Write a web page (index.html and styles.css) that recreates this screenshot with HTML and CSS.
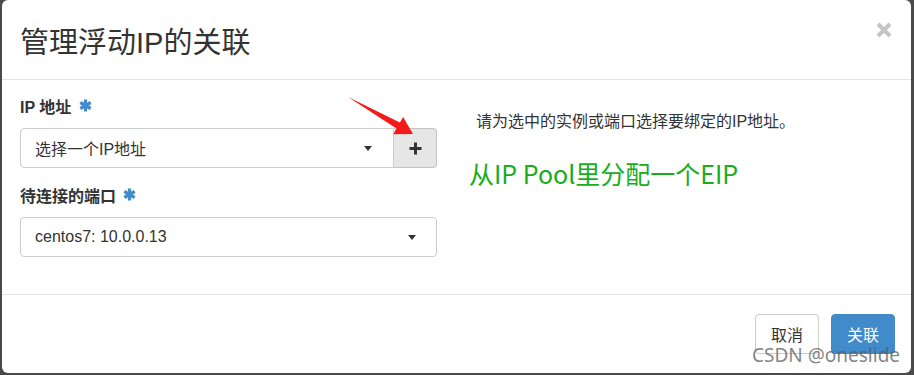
FILE: index.html
```html
<!DOCTYPE html>
<html lang="zh-CN">
<head>
    <meta charset="UTF-8">
    <title>管理浮动IP的关联</title>
    <link rel="stylesheet" href="styles.css">
</head>
<body>
    <div class="modal">
        <div class="modal-header">
            <h3 class="modal-title">管理浮动IP的关联</h3>
            <svg class="close" width="16" height="16" viewBox="0 0 16 16">
                <path d="M2 2 L14 14 M14 2 L2 14" stroke="#c4c4c4" stroke-width="4" />
            </svg>
        </div>

        <div class="modal-body">
            <div class="col-left">
                <div class="form-group">
                    <label class="form-label">IP 地址
                        <svg class="req" width="13" height="13" viewBox="0 0 13 13">
                            <path d="M6.5 0.5 V12.5 M1.3 3.5 L11.7 9.5 M11.7 3.5 L1.3 9.5" stroke="#428bca" stroke-width="3.2" />
                        </svg>
                    </label>
                    <div class="input-group">
                        <div class="select select-grouped">
                            <span>选择一个IP地址</span>
                            <span class="caret"></span>
                        </div>
                        <div class="addon">
                            <svg width="13" height="13" viewBox="0 0 13 13">
                                <path d="M6.5 0.5 V12.5 M0.5 6.5 H12.5" stroke="#333" stroke-width="3" />
                            </svg>
                        </div>
                    </div>
                </div>
                <div class="form-group">
                    <label class="form-label">待连接的端口
                        <svg class="req" width="13" height="13" viewBox="0 0 13 13">
                            <path d="M6.5 0.5 V12.5 M1.3 3.5 L11.7 9.5 M11.7 3.5 L1.3 9.5" stroke="#428bca" stroke-width="3.2" />
                        </svg>
                    </label>
                    <div class="select">
                        <span>centos7: 10.0.0.13</span>
                        <span class="caret"></span>
                    </div>
                </div>
            </div>
            <div class="col-right">
                <p class="help">请为选中的实例或端口选择要绑定的IP地址。</p>
                <p class="note">从IP Pool里分配一个EIP</p>
            </div>
        </div>

        <div class="modal-footer">
            <button class="btn">取消</button>
            <button class="btn btn-primary">关联</button>
        </div>

        <div class="watermark">CSDN @oneslide</div>
    </div>

    <!-- 标注箭头 -->
    <svg class="arrow" width="914" height="375" viewBox="0 0 914 375">
        <polygon points="348,97 399.9,122.6 403.1,116.9 413,134 393.3,134.3 396.5,128.6" fill="#f51a1a" />
    </svg>
</body>
</html>
```

FILE: styles.css
```css
/* 基础 */
body {
    margin: 0;
    height: 375px;
    overflow: hidden;
    position: relative;
    background-color: #4a4a4a;
    font-family: "Liberation Sans", "Noto Sans CJK SC", sans-serif;
    color: #333;
}

.modal {
    position: relative;
    margin: 0 3px 0 2px;
    height: 373px;
    background-color: #fff;
    border-radius: 6px;
    display: flex;
    flex-direction: column;
}

/* 头部 */
.modal-header {
    height: 79px;
    border-bottom: 1px solid #e5e5e5;
    padding: 0 19px 0 18px;
    display: flex;
    align-items: center;
    justify-content: space-between;
}

.modal-title {
    margin: 0;
    font-size: 29px;
    font-weight: normal;
    color: #333;
}

.close {
    align-self: flex-start;
    margin-top: 22px;
}

/* 内容 */
.modal-body {
    flex: 1;
    display: flex;
    padding: 18px 20px 0 18px;
}

.col-left {
    width: 417px;
}

.col-right {
    margin-left: 39px;
    padding-top: 14px;
}

.form-group {
    margin-bottom: 19px;
}

.form-label {
    display: block;
    font-size: 16px;
    line-height: 20px;
    font-weight: bold;
    margin-bottom: 10px;
}

.req {
    margin-left: 3px;
    vertical-align: 1px;
}

.input-group {
    display: flex;
}

.select {
    box-sizing: border-box;
    height: 40px;
    border: 1px solid #ccc;
    border-radius: 4px;
    padding: 0 20px 0 14px;
    display: flex;
    align-items: center;
    justify-content: space-between;
    font-size: 16px;
}

.select-grouped {
    width: 374px;
    border-radius: 4px 0 0 4px;
    padding-right: 21px;
}

.caret {
    width: 0;
    height: 0;
    border-top: 5px solid #333;
    border-left: 4.5px solid transparent;
    border-right: 4.5px solid transparent;
}

.addon {
    box-sizing: border-box;
    width: 43px;
    height: 40px;
    background-color: #e6e6e6;
    border: 1px solid #c4c4c4;
    border-left: none;
    border-radius: 0 4px 4px 0;
    display: flex;
    align-items: center;
    justify-content: center;
}

.help {
    margin: 0;
    font-size: 16px;
    line-height: 20px;
}

.note {
    margin: 26px 0 0 -7px;
    font-family: "Noto Sans CJK SC", sans-serif;
    font-size: 25px;
    line-height: 30px;
    color: #19ad19;
}

/* 底部 */
.modal-footer {
    border-top: 1px solid #e5e5e5;
    padding: 19px 16px 19px;
    display: flex;
    justify-content: flex-end;
    gap: 12px;
}

.btn {
    height: 40px;
    padding: 0 15px;
    font-family: "Liberation Sans", "Noto Sans CJK SC", sans-serif;
    font-size: 16px;
    color: #333;
    background-color: #fff;
    border: 1px solid #ccc;
    border-radius: 4px;
}

.btn-primary {
    color: #fff;
    background-color: #428bca;
    border-color: #428bca;
}

.watermark {
    position: absolute;
    left: 750px;
    top: 344px;
    font-family: "Noto Sans", sans-serif;
    font-size: 19px;
    line-height: 22px;
    color: rgba(90, 90, 90, 0.75);
}

.arrow {
    position: absolute;
    left: 0;
    top: 0;
    pointer-events: none;
}
```
